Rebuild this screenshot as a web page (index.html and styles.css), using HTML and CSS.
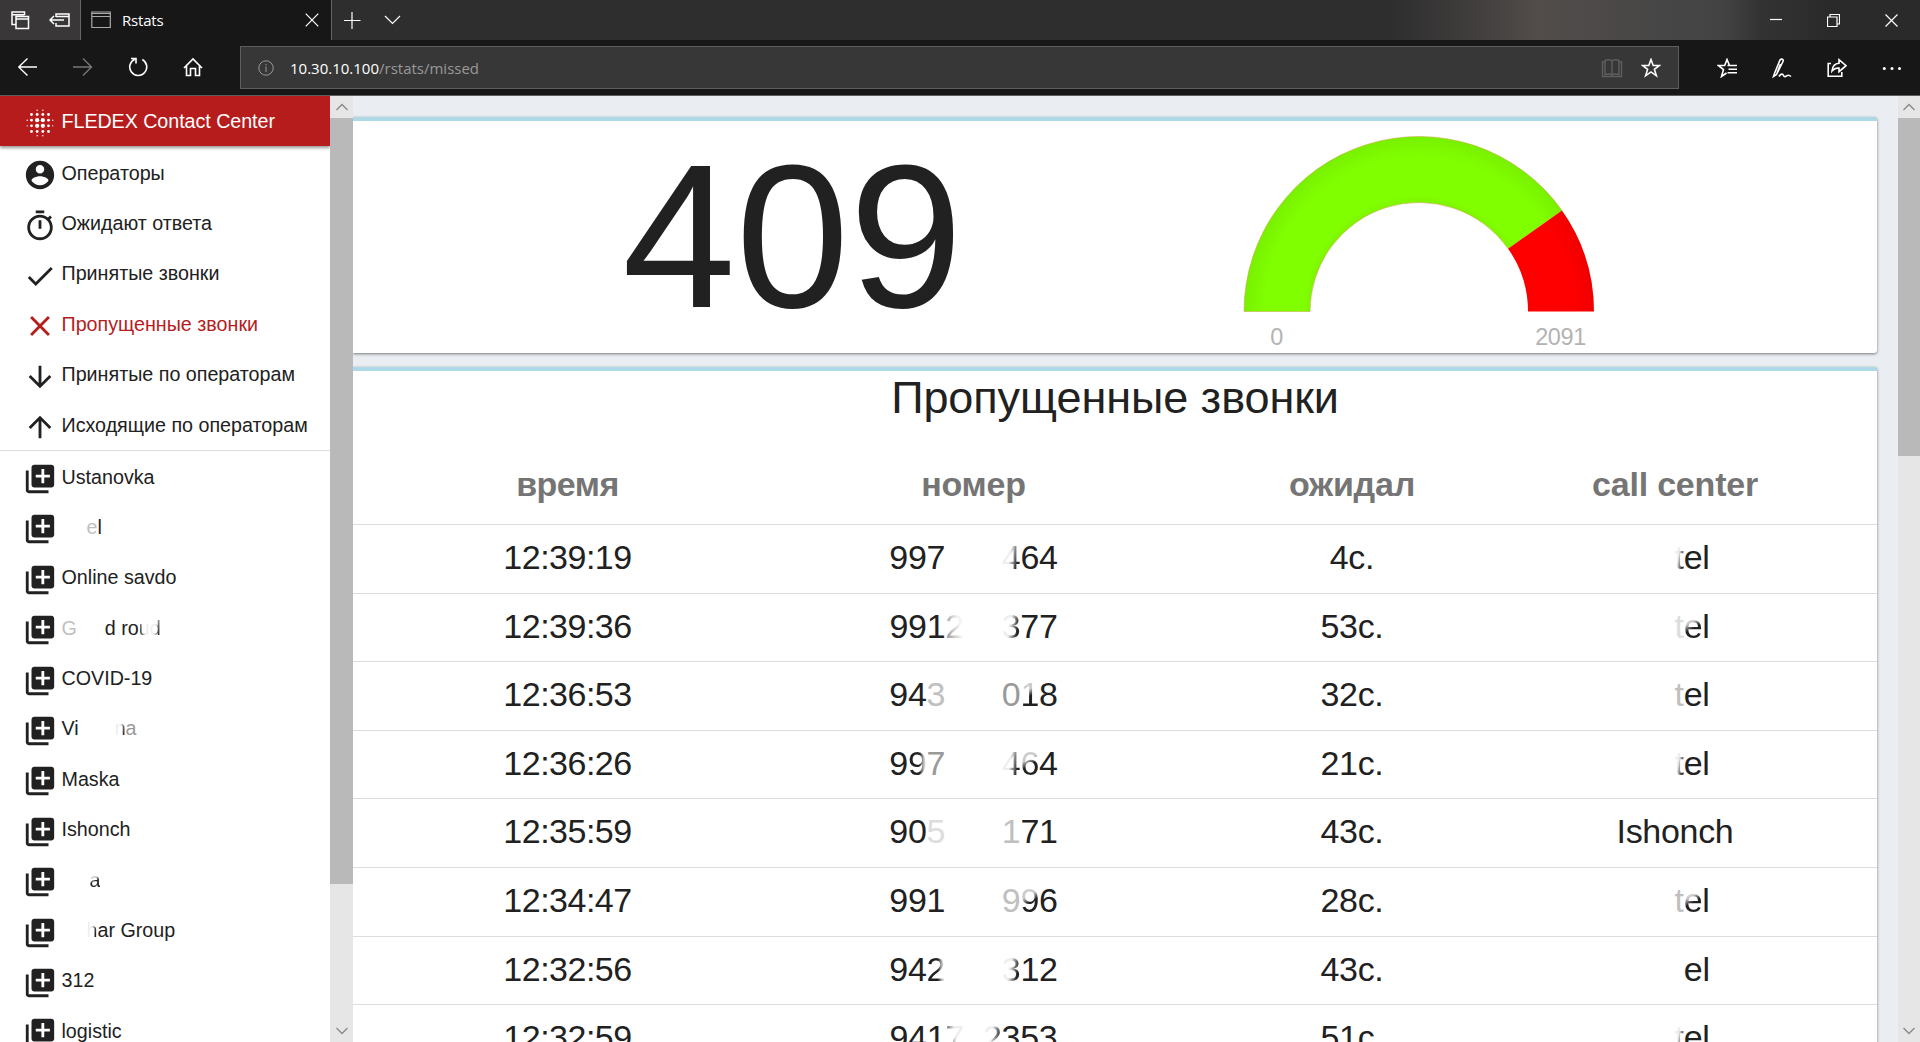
FILE: index.html
```html
<!DOCTYPE html>
<html lang="ru">
<head>
<meta charset="utf-8">
<title>Rstats</title>
<link rel="stylesheet" href="styles.css">
</head>
<body>
<svg class="defs" width="0" height="0">
  <symbol id="add" viewBox="0 0 24 24"><path d="M4 6H2v14c0 1.100.9 2 2 2h14v-2H4V6zm16-4H8c-1.100 0-2 .9-2 2v12c0 1.100.9 2 2 2h12c1.100 0 2-.9 2-2V4c0-1.100-.9-2-2-2zm-1 9h-4v4h-2v-4H9V9h4V5h2v4h4v2z"/></symbol>
</svg>
<header class="titlebar">
  <div class="tab-tools">
    <svg width="20" height="20" viewBox="0 0 20 20"><path d="M5.500 14.500H2V2h12.500v3M2 4.700h12.500M6 6.500h12.500v12H6zM6 9h12.500"/></svg>
    <svg width="21" height="20" viewBox="0 0 21 20"><path d="M7 7V4h13v12H7v-3M7 6.500h13M15 10H1M5 6l-4 4 4 4"/></svg>
  </div>
  <div class="tab">
    <svg class="dim" width="20" height="18" viewBox="0 0 20 18"><path d="M.8 1h18.500v15.500H.8zM.8 5.500h18.500M.8 2.500h18.500"/></svg>
    <span class="tab-title">Rstats</span>
    <svg width="14" height="14" viewBox="0 0 14 14"><path d="M.7.7l12.600 12.600M13.300.7L.7 13.300"/></svg>
  </div>
  <svg class="new-tab" width="18" height="18" viewBox="0 0 18 18"><path d="M1 9.500h16.500M9 1v17"/></svg>
  <svg class="tab-menu" width="17" height="10" viewBox="0 0 17 10"><path d="M1 1l7.500 7.500L16 1"/></svg>
  <div class="window-buttons">
    <svg width="12" height="12" viewBox="0 0 12 12"><path d="M0 5.500h12"/></svg>
    <svg width="13" height="13" viewBox="0 0 13 13"><path d="M.5 3h9.500v9.500H.5zM3 3V.5h9.500V10H10"/></svg>
    <svg width="13" height="13" viewBox="0 0 13 13"><path d="M.5.5l12 12M12.500.5l-12 12"/></svg>
  </div>
</header>
<nav class="toolbar">
  <div class="nav-buttons">
    <svg width="20" height="20" viewBox="0 0 20 20"><path d="M19 10H.7M9.500 1.500L.7 10l8.800 8.500"/></svg>
    <svg class="off" width="20" height="20" viewBox="0 0 20 20"><path d="M0 10h18.500M10 1.500l8.500 8.500-8.500 8.500"/></svg>
    <svg class="bold" width="20" height="20" viewBox="0 0 20 20"><path d="M6.800 2.200a8.500 8.500 0 1 0 7.500.3M3 1.500h5v5"/></svg>
    <svg class="bold" width="20" height="20" viewBox="0 0 20 20"><path d="M1 11l9-9 9 9M3.500 9v9.500h4v-7h5v7h4V9"/></svg>
  </div>
  <div class="address">
    <svg class="info" width="16" height="16" viewBox="0 0 16 16"><circle cx="8" cy="8" r="7.200"/><path d="M8 6.500v5.500M8 4v1.300"/></svg>
    <span class="url"><b>10.30.10.100</b>/rstats/missed</span>
    <svg class="book" width="22" height="20" viewBox="0 0 22 20"><path d="M4 2.500c3-1 6-.8 7 .5 1-1.300 4-1.500 7-.5v14c-3-.7-6-.5-7 .5-1-1-4-1.200-7-.5zM11 3v14M4 4H1.500v14.500h19V4H18"/></svg>
    <svg class="bold" width="20" height="20" viewBox="0 0 20 20"><path d="M10 1.500l2.200 6h6.300l-5.100 3.900 2 6.400-5.400-3.900-5.400 3.900 2-6.400L1.500 7.500h6.300z"/></svg>
  </div>
  <div class="actions">
    <svg class="bold" width="20" height="20" viewBox="0 0 20 20"><path d="M20 7.500h-7.500L10 1.500l-2.300 6H1.300L6.500 11.500 4.500 18.500 9.500 15M11.500 11.200H20M10.500 14.700H20M14.500 11.200M10.500 7.500H20"/></svg>
    <svg class="bold" width="20" height="20" viewBox="0 0 20 20"><path d="M2.500 15.500l-1 3 3-2L11 3.500c.8-2-1.500-3.300-3-1.500zM8.500 6l-3.500 9M7 18.500c2-3 3.700-3 4.500-1s2.500 1 3.500.2 2.500-.5 4 .8"/></svg>
    <svg class="bold" width="20" height="20" viewBox="0 0 20 20"><path d="M4 5.500H1.200v12.800h13.600V14M5 13c.5-5 3-7.500 7-7.700V1.700l7 6-7 6V10c-3-.2-5 .7-7 3z"/></svg>
    <svg class="dots" width="20" height="20" viewBox="0 0 20 20"><circle cx="2.300" cy="10.500" r="1.500"/><circle cx="10" cy="10.500" r="1.500"/><circle cx="17.500" cy="10.500" r="1.500"/></svg>
  </div>
</nav>
<div class="page">
  <aside class="sidebar">
    <div class="brand">
      <svg class="icon" viewBox="0 0 24 24">
        <circle cx="6" cy="6" r="1"/><circle cx="10" cy="6" r="1"/><circle cx="14" cy="6" r="1"/><circle cx="18" cy="6" r="1"/>
        <circle cx="6" cy="10" r="1"/><circle cx="10" cy="10" r="1.500"/><circle cx="14" cy="10" r="1.500"/><circle cx="18" cy="10" r="1"/>
        <circle cx="6" cy="14" r="1"/><circle cx="10" cy="14" r="1.500"/><circle cx="14" cy="14" r="1.500"/><circle cx="18" cy="14" r="1"/>
        <circle cx="6" cy="18" r="1"/><circle cx="10" cy="18" r="1"/><circle cx="14" cy="18" r="1"/><circle cx="18" cy="18" r="1"/>
        <circle cx="10" cy="3" r=".5"/><circle cx="14" cy="3" r=".5"/><circle cx="10" cy="21" r=".5"/><circle cx="14" cy="21" r=".5"/>
        <circle cx="3" cy="10" r=".5"/><circle cx="3" cy="14" r=".5"/><circle cx="21" cy="10" r=".5"/><circle cx="21" cy="14" r=".5"/>
      </svg>
      <span>FLEDEX Contact Center</span>
    </div>
    <ul class="menu">
      <li><svg class="icon" viewBox="0 0 24 24"><path d="M12 2C6.480 2 2 6.480 2 12s4.480 10 10 10 10-4.480 10-10S17.520 2 12 2zm0 3c1.660 0 3 1.340 3 3s-1.340 3-3 3-3-1.340-3-3 1.340-3 3-3zm0 14.200c-2.500 0-4.710-1.280-6-3.220.03-1.990 4-3.080 6-3.080 1.990 0 5.970 1.090 6 3.080-1.290 1.940-3.500 3.220-6 3.220z"/></svg><span>Операторы</span></li>
      <li><svg class="icon" viewBox="0 0 24 24"><path d="M15 1H9v2h6V1zm-4 13h2V8h-2v6zm8.030-6.610l1.420-1.420c-.43-.51-.9-.99-1.410-1.410l-1.420 1.420C16.070 4.740 14.120 4 12 4c-4.970 0-9 4.030-9 9s4.020 9 9 9 9-4.030 9-9c0-2.120-.74-4.070-1.970-5.610zM12 20c-3.870 0-7-3.130-7-7s3.130-7 7-7 7 3.130 7 7-3.130 7-7 7z"/></svg><span>Ожидают ответа</span></li>
      <li><svg class="icon" viewBox="0 0 24 24"><path d="M9 16.170L4.830 12l-1.420 1.410L9 19 21 7l-1.410-1.410z"/></svg><span>Принятые звонки</span></li>
      <li class="active"><svg class="icon" viewBox="0 0 24 24"><path d="M19 6.410L17.590 5 12 10.590 6.410 5 5 6.410 10.590 12 5 17.590 6.410 19 12 13.410 17.590 19 19 17.590 13.410 12z"/></svg><span>Пропущенные звонки</span></li>
      <li><svg class="icon" viewBox="0 0 24 24"><path d="M20 12l-1.410-1.410L13 16.170V4h-2v12.170l-5.580-5.590L4 12l8 8 8-8z"/></svg><span>Принятые по операторам</span></li>
      <li><svg class="icon" viewBox="0 0 24 24"><path d="M4 12l1.410 1.410L11 7.830V20h2V7.830l5.580 5.590L20 12l-8-8-8 8z"/></svg><span>Исходящие по операторам</span></li>
    </ul>
    <ul class="menu queues">
      <li><svg class="icon"><use href="#add"/></svg><span>Ustanovka</span></li>
      <li><svg class="icon"><use href="#add"/></svg><span><i class="gap w25"></i><i class="faint">e</i>l</span></li>
      <li><svg class="icon"><use href="#add"/></svg><span>Online savdo</span></li>
      <li><svg class="icon"><use href="#add"/></svg><span><i class="faint">G</i><i class="gap w28"></i>d ro<i class="fade-out">u</i><i class="fade-in">d</i></span></li>
      <li><svg class="icon"><use href="#add"/></svg><span>COVID-19</span></li>
      <li><svg class="icon"><use href="#add"/></svg><span>Vi<i class="gap w41"></i><i class="fade-in">n</i><i class="mid">a</i></span></li>
      <li><svg class="icon"><use href="#add"/></svg><span>Maska</span></li>
      <li><svg class="icon"><use href="#add"/></svg><span>Ishonch</span></li>
      <li><svg class="icon"><use href="#add"/></svg><span><i class="gap w28"></i><i class="soft-in">a</i></span></li>
      <li><svg class="icon"><use href="#add"/></svg><span><i class="gap w25"></i><i class="fade-in">h</i>ar Group</span></li>
      <li><svg class="icon"><use href="#add"/></svg><span>312</span></li>
      <li><svg class="icon"><use href="#add"/></svg><span>logistic</span></li>
    </ul>
  </aside>
  <div class="scrollbar side">
    <svg width="12" height="22" viewBox="0 0 12 22"><path d="M.5 14L6 8.500l5.500 5.500"/></svg>
    <div class="thumb"></div>
    <svg class="down" width="12" height="22" viewBox="0 0 12 22"><path d="M.5 8L6 13.500 11.500 8"/></svg>
  </div>
  <main class="content">
    <section class="card summary">
      <div class="total">409</div>
      <svg class="gauge" width="400" height="232" viewBox="0 0 400 232">
        <defs>
          <radialGradient id="green" gradientUnits="userSpaceOnUse" cx="200" cy="190" r="175"><stop offset=".62" stop-color="#7ff400"/><stop offset=".66" stop-color="#80ff00"/><stop offset=".88" stop-color="#80ff00"/><stop offset="1" stop-color="#78f000"/></radialGradient>
          <radialGradient id="red" gradientUnits="userSpaceOnUse" cx="200" cy="190" r="175"><stop offset=".62" stop-color="#f80000"/><stop offset=".66" stop-color="#f00"/><stop offset=".88" stop-color="#f00"/><stop offset="1" stop-color="#f00000"/></radialGradient>
        </defs>
        <path fill="url(#green)" stroke="#c8a040" stroke-width=".5" d="M25 190.500A175 175 0 0 1 343 89.600L289.100 127.700A109 109 0 0 0 91 190.500z"/>
        <path fill="url(#red)" d="M343 89.600A175 175 0 0 1 375 190.500H309A109 109 0 0 0 289.100 127.700z"/>
        <text x="57.500" y="224">0</text>
        <text x="341.500" y="224">2091</text>
      </svg>
    </section>
    <section class="card calls">
      <h1>Пропущенные звонки</h1>
      <div class="row head"><span>время</span><span>номер</span><span>ожидал</span><span>call center</span></div>
      <div class="row"><span>12:39:19</span><span>997<i class="gap d3"></i><i class="fade-in">4</i>64</span><span>4с.</span><span><i class="gap d1"></i><i class="fade-in">t</i>el</span></div>
      <div class="row"><span>12:39:36</span><span>991<i class="fade-out pale">2</i><i class="gap d2"></i><i class="fade-in">3</i>77</span><span>53с.</span><span><i class="gap d1"></i><i class="pale">t</i><i class="soft-in">e</i>l</span></div>
      <div class="row"><span>12:36:53</span><span>94<i class="faint">3</i><i class="gap d3"></i><i class="mid">0</i><i class="soft-in">1</i>8</span><span>32с.</span><span><i class="gap d1"></i><i class="faint">t</i>el</span></div>
      <div class="row"><span>12:36:26</span><span>9<i class="soft-out">9</i><i class="mid">7</i><i class="gap d3"></i><i class="fade-in">4</i><i class="soft-in">6</i>4</span><span>21с.</span><span><i class="gap d1"></i><i class="fade-in">t</i>el</span></div>
      <div class="row"><span>12:35:59</span><span>90<i class="pale">5</i><i class="gap d3"></i><i class="faint">1</i>71</span><span>43с.</span><span>Ishonch</span></div>
      <div class="row"><span>12:34:47</span><span>991<i class="gap d3"></i><i class="faint">9</i><i class="soft-in">9</i>6</span><span>28с.</span><span><i class="gap d1"></i><i class="faint">t</i><i class="soft-in">e</i>l</span></div>
      <div class="row"><span>12:32:56</span><span>94<i class="soft-out">2</i><i class="gap d3"></i><i class="fade-in">3</i>12</span><span>43с.</span><span><i class="gap d1 no-t"></i>el</span></div>
      <div class="row"><span>12:32:59</span><span>941<i class="fade-out">7</i><i class="gap d1n"></i><i class="fade-in">2</i>353</span><span>51с.</span><span><i class="gap d1"></i><i class="fade-in">t</i>el</span></div>
    </section>
  </main>
  <div class="scrollbar main-bar">
    <svg width="12" height="22" viewBox="0 0 12 22"><path d="M.5 14L6 8.500l5.500 5.500"/></svg>
    <div class="thumb"></div>
    <svg class="down" width="12" height="22" viewBox="0 0 12 22"><path d="M.5 8L6 13.500 11.500 8"/></svg>
  </div>
</div>
</body>
</html>
```
FILE: styles.css
```css
* { box-sizing: border-box; }
body {
  margin: 0;
  height: 1042px;
  overflow: hidden;
  display: flex;
  flex-direction: column;
  font-family: "Liberation Sans", Arial, sans-serif;
  color: #212121;
  background: #fff;
}
svg { flex: none; display: block; }
.defs { position: absolute; }

/* Browser chrome */
.titlebar, .toolbar {
  display: flex;
  align-items: center;
  flex: none;
  font-family: "Open Sans", "Noto Sans", sans-serif;
  font-size: 15px;
  color: #fff;
}
.titlebar svg, .toolbar svg { fill: none; stroke: #fff; stroke-width: 1.2; }
.titlebar .tab-tools svg { stroke-width: 1.5; }
.toolbar svg { stroke-width: 1.4; }
.toolbar svg.bold { stroke-width: 1.6; }
.titlebar {
  height: 40px;
  background: linear-gradient(90deg, #2e2e2e 0, #2e2e2e 1390px, #423f3e 1480px, #524d4b 1540px, #4c4948 1600px, #454545 1690px, #424242 1725px, #333 1760px, #2a2a2a 1830px, #2a2a2a);
}
.tab-tools {
  width: 81px;
  height: 40px;
  padding-left: 10px;
  display: flex;
  align-items: center;
  gap: 19px;
  background: #393737;
  border-right: 1px solid #666;
}
.tab {
  width: 251px;
  height: 40px;
  padding: 0 12px 0 10px;
  display: flex;
  align-items: center;
  background: #171717;
  border-right: 1px solid #666;
}
.titlebar .dim { stroke: #aaa; }
.tab-title { flex: 1; padding-left: 11px; letter-spacing: -.2px; }
.new-tab { margin-left: 11px; }
.tab-menu { margin-left: 23px; }
.window-buttons { margin-left: auto; padding-right: 22px; display: flex; align-items: center; gap: 45px; }
.toolbar { height: 56px; background: #171717; border-bottom: 1px solid #5c5c5c; }
.nav-buttons { width: 240px; padding: 0 0 1px 18px; display: flex; gap: 35px; }
.toolbar .off { stroke: #777; }
.address {
  width: 1439px;
  height: 43px;
  padding: 0 17px 0 17px;
  display: flex;
  align-items: center;
  background: #373737;
  border: 1px solid #5e5e5e;
}
.toolbar .info { stroke: #999; stroke-width: 1; }
.url { flex: 1; padding: 0 0 0 16px; color: #999; }
.url b { font-weight: 400; color: #fff; }
.toolbar .book { stroke: #5e5e5e; margin-right: 18px; }
.actions { display: flex; gap: 35px; padding-left: 38px; }
.toolbar .dots { fill: #fff; stroke: none; }

/* Page */
.page { flex: 1; min-height: 0; display: flex; background: #eaeef3; overflow: hidden; }
.sidebar { width: 330px; flex: none; background: #fff; font-size: 19.7px; overflow: hidden; }
.brand, .menu li { display: flex; align-items: center; gap: 5px; padding-left: 22.500px; }
.brand {
  height: 50px;
  background: #b71c1c;
  color: #fff;
  box-shadow: 0 2px 3px rgba(0, 0, 0, .4);
}
.brand span { letter-spacing: -.05px; }
.icon { width: 34px; height: 34px; margin-top: 4px; fill: currentColor; }
.menu { list-style: none; margin: 0; padding: 2px 0 0; }
.menu li { height: 50.4px; white-space: nowrap; }
.menu .active { color: #b71c1c; }
.queues { border-top: 1px solid #ddd; padding: .5px 0 0; }

.scrollbar { flex: none; display: flex; flex-direction: column; align-items: center; background: #e6e6e6; }
.scrollbar svg { fill: none; stroke: #888; stroke-width: 1.3; }
.side { width: 23px; }
.main-bar { width: 22px; }
.thumb { align-self: stretch; background: #b9b9b9; }
.side .thumb { height: 766px; }
.main-bar .thumb { height: 338px; }
.down { margin-top: auto; }

.content { width: 1545px; flex: none; padding: 21px 21px 0 0; overflow: hidden; }
.card {
  background: #fff;
  border-top: 4px solid #add8e6;
  border-radius: 0 3px 3px 0;
  box-shadow: 0 1px 3px rgba(0, 0, 0, .5);
}
.summary { height: 236px; display: flex; }
.total { width: 866px; padding-left: 13px; text-align: center; font-size: 204px; line-height: 231px; }
.gauge text { font-size: 23.5px; letter-spacing: -.4px; fill: #b3b3b3; text-anchor: middle; }
.calls { margin-top: 14px; height: 1000px; }
h1 { margin: 0; height: 58px; text-align: center; font-size: 45px; line-height: 54px; font-weight: 400; letter-spacing: -.08px; }
.row {
  display: grid;
  grid-template-columns: 297px 515px 242px 404px;
  padding-left: 66px;
  height: 68.600px;
  line-height: 65px;
  border-top: 1px solid #ddd;
  font-size: 34px;
  letter-spacing: -.3px;
  text-align: center;
}
.row span:first-child { letter-spacing: -.5px; }
.head { height: 95px; line-height: 111px; border-top: 0; font-weight: 700; color: #757575; letter-spacing: -.2px; }

/* Masked-out parts of names and numbers */
i { font-style: normal; }
.gap { display: inline-block; }
.d1 { width: 1em; }
.no-t { width: 1.278em; }
.d1n { width: 1ch; }
.d2 { width: 2ch; }
.d3 { width: 3ch; }
.w25 { width: 25px; }
.w28 { width: 28px; }
.w41 { width: 36px; }
.mid { color: #999; }
.faint { color: #c0c0c0; }
.pale { color: #ddd; }
.fade-in, .fade-out, .soft-in, .soft-out { color: transparent; background-clip: text; -webkit-background-clip: text; }
.fade-in { background-image: linear-gradient(100deg, #eee 45%, #212121 80%); }
.fade-out { background-image: linear-gradient(80deg, #212121 10%, #eee 55%); }
.pale.fade-out { color: transparent; background-image: linear-gradient(80deg, #999 10%, #f4f4f4 70%); }
.soft-in { background-image: linear-gradient(150deg, #ccc 40%, #212121 55%); }
.soft-out { background-image: linear-gradient(90deg, #212121 60%, #ccc 85%); }
```
